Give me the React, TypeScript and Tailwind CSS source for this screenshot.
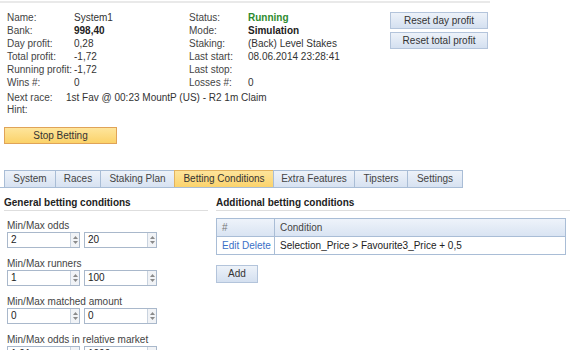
import React from "react";

const font = "font-['Liberation_Sans',Arial,sans-serif]";

const infoRows: [string, React.ReactNode, string, React.ReactNode][] = [
  ["Name:", "System1", "Status:", <span className="font-bold text-[#2e8b2e]">Running</span>],
  ["Bank:", <span className="font-bold text-[#222]">998,40</span>, "Mode:", <span className="font-bold text-[#222]">Simulation</span>],
  ["Day profit:", "0,28", "Staking:", "(Back) Level Stakes"],
  ["Total profit:", "-1,72", "Last start:", "08.06.2014 23:28:41"],
  ["Running profit:", "-1,72", "Last stop:", ""],
  ["Wins #:", "0", "Losses #:", "0"],
];

const tabs = [
  { label: "System", w: "w-[51px]" },
  { label: "Races", w: "w-[45px]" },
  { label: "Staking Plan", w: "w-[74px]" },
  { label: "Betting Conditions", w: "w-[99px]", active: true },
  { label: "Extra Features", w: "w-[81px]" },
  { label: "Tipsters", w: "w-[53px]" },
  { label: "Settings", w: "w-[56px]" },
];

const ranges = [
  { label: "Min/Max odds", min: "2", max: "20" },
  { label: "Min/Max runners", min: "1", max: "100" },
  { label: "Min/Max matched amount", min: "0", max: "0" },
  { label: "Min/Max odds in relative market", min: "1,01", max: "1000" },
];

function Spin({ value }: { value: string }) {
  return (
    <div className="flex h-[16px] w-[73px] border border-[#a9b8cb] bg-white">
      <span className="flex-1 pl-[3px] leading-[14px] text-[#222]">{value}</span>
      <div className="flex w-[9px] flex-col items-center justify-center gap-[2px] border-l border-[#c9d3df] bg-[#f1f3f6]">
        <svg width="5" height="3" viewBox="0 0 5 3">
          <path d="M0 3 L2.5 0 L5 3 Z" fill="#8a8a8a" />
        </svg>
        <svg width="5" height="3" viewBox="0 0 5 3">
          <path d="M0 0 L2.5 3 L5 0 Z" fill="#8a8a8a" />
        </svg>
      </div>
    </div>
  );
}

function BlueButton({ children, className }: { children: React.ReactNode; className: string }) {
  return (
    <button
      className={`flex items-center justify-center border border-[#b3c4db] bg-gradient-to-b from-[#edf2f9] to-[#d4e0f0] leading-none text-[#333] ${className}`}
    >
      {children}
    </button>
  );
}

export default function App() {
  return (
    <div className={`h-[350px] w-[570px] overflow-hidden whitespace-nowrap bg-white text-[10px] text-[#333] ${font}`}>
      <div className="mt-px h-[2px] w-[490px] bg-[#e9e9e9]" />

      <div className="flex pl-[7px] pt-[8px]">
        <div>
          <div className="grid grid-cols-[67px_115px_59px_142px] leading-[13px]">
            {infoRows.map(([l1, v1, l2, v2]) => (
              <React.Fragment key={l1}>
                <span className="text-[#444]">{l1}</span>
                <span>{v1}</span>
                <span className="text-[#444]">{l2}</span>
                <span>{v2}</span>
              </React.Fragment>
            ))}
          </div>
          <div className="mt-[2px] flex leading-[13px]">
            <span className="w-[59px] text-[#444]">Next race:</span>
            <span>1st Fav @ 00:23 MountP (US) - R2 1m Claim</span>
          </div>
          <div className="leading-[12px] text-[#444]">Hint:</div>
        </div>
        <div className="mt-[1px] flex flex-col gap-[3px]">
          <BlueButton className="h-[17px] w-[98px]">Reset day profit</BlueButton>
          <BlueButton className="h-[17px] w-[98px]">Reset total profit</BlueButton>
        </div>
      </div>

      <button className="ml-[4px] mt-[11px] flex h-[17px] w-[113px] items-center justify-center border border-[#e0a358] bg-gradient-to-b from-[#fee59b] to-[#fbd268] leading-none text-[#333]">
        Stop Betting
      </button>

      <div className="mt-[26px] flex w-[463px] border-b border-[#a9bdd6] pl-[4px]">
        {tabs.map((t, i) => (
          <div
            key={t.label}
            className={`flex h-[17px] items-center justify-center border-t border-l leading-none ${t.w} ${
              i === tabs.length - 1 ? "border-r" : ""
            } ${
              t.active
                ? "border-[#e3b35e] bg-gradient-to-b from-[#fee49a] to-[#fbd36c] text-[#333]"
                : "border-[#a9bdd6] bg-gradient-to-b from-[#edf2f9] to-[#d7e2f1] text-[#444]"
            }`}
          >
            {t.label}
          </div>
        ))}
      </div>

      <div className="flex pt-[8px]">
        <div className="ml-[4px] w-[204px]">
          <div className="border-b border-[#dedede] pb-[1px] font-bold leading-[13px] text-[#222]">
            General betting conditions
          </div>
          <div className="pl-[3px]">
            {ranges.map((r, i) => (
              <div key={r.label} className={i === 0 ? "mt-[9px]" : "mt-[10px]"}>
                <div className="leading-[12px] text-[#444]">{r.label}</div>
                <div className="flex gap-[4px]">
                  <Spin value={r.min} />
                  <Spin value={r.max} />
                </div>
              </div>
            ))}
          </div>
        </div>

        <div className="ml-[8px] flex-1">
          <div className="border-b border-[#dedede] pb-[1px] font-bold leading-[13px] text-[#222]">
            Additional betting conditions
          </div>
          <table className="mt-[7px] w-[350px] border-collapse">
            <thead>
              <tr className="h-[18px] bg-gradient-to-b from-[#eef3fa] to-[#d8e3f2]">
                <th className="w-[58px] border border-[#a9bdd6] pl-[5px] text-left font-normal text-[#777]">#</th>
                <th className="border border-[#a9bdd6] pl-[5px] text-left font-normal text-[#444]">Condition</th>
              </tr>
            </thead>
            <tbody>
              <tr className="h-[18px]">
                <td className="border border-[#a9bdd6] pl-[5px] text-[#3a6fc6]">Edit Delete</td>
                <td className="border border-[#a9bdd6] pl-[5px] text-[#222]">
                  Selection_Price &gt; Favourite3_Price + 0,5
                </td>
              </tr>
            </tbody>
          </table>
          <BlueButton className="mt-[10px] h-[18px] w-[42px]">Add</BlueButton>
        </div>
      </div>
    </div>
  );
}
